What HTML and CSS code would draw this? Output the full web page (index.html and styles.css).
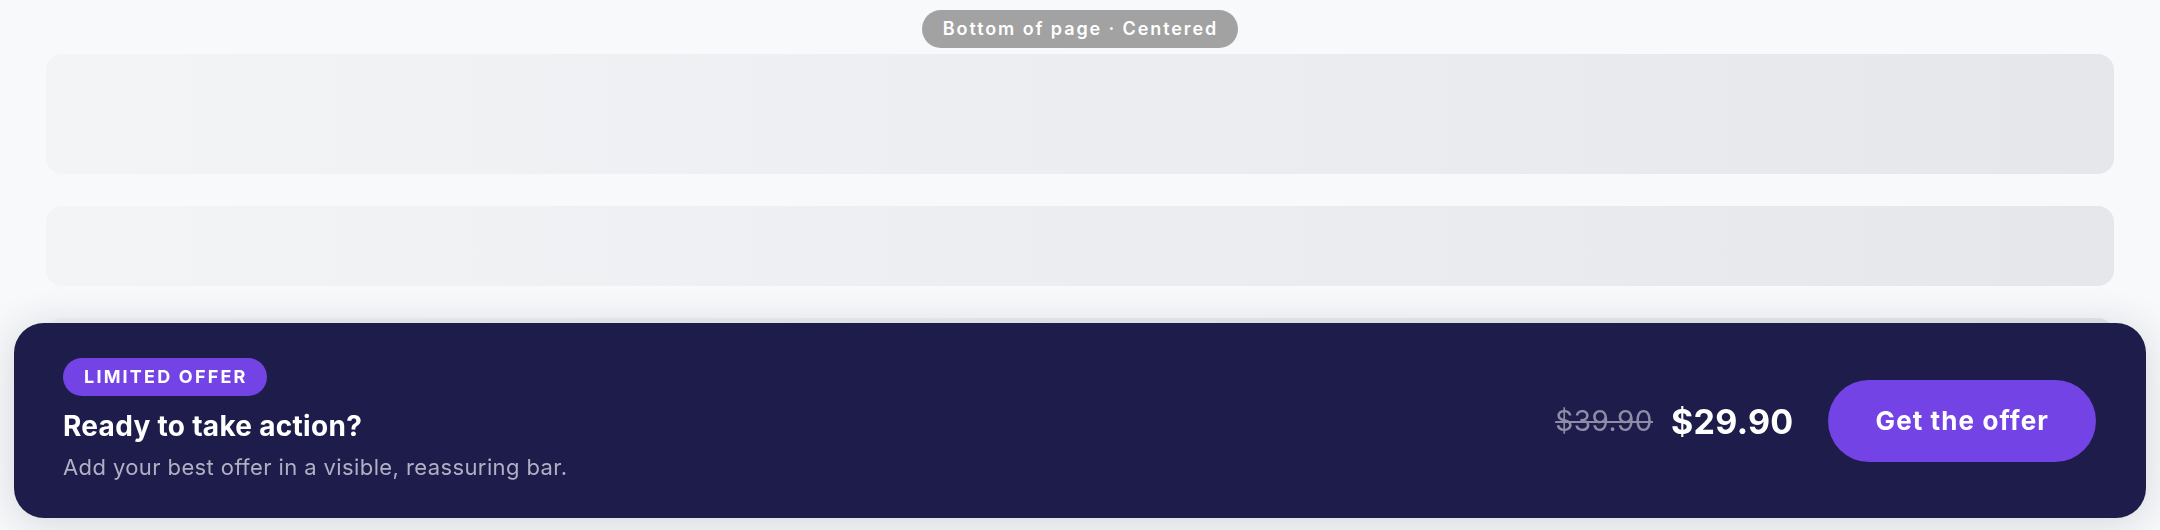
FILE: index.html
```html
<!DOCTYPE html>
<html lang="en">
<head>
<meta charset="utf-8">
<title>Sticky offer bar</title>
<link rel="stylesheet" href="styles.css">
</head>
<body>
<main class="page">
  <div class="label-row"><span class="label">Bottom of page · Centered</span></div>
  <div class="skeleton skeleton-lg"></div>
  <div class="skeleton skeleton-md"></div>
  <div class="skeleton skeleton-md"></div>
</main>
<aside class="offer-bar">
  <div class="offer-text">
    <span class="badge">LIMITED OFFER</span>
    <h2 class="offer-title">Ready to take action?</h2>
    <p class="offer-sub">Add your best offer in a visible, reassuring bar.</p>
  </div>
  <div class="offer-actions">
    <span class="price-old">$39.90</span>
    <span class="price-new">$29.90</span>
    <button class="cta" type="button">Get the offer</button>
  </div>
</aside>
</body>
</html>
```
FILE: styles.css
```css
* { box-sizing: border-box; }
html, body { margin: 0; padding: 0; }
body {
  background: #f8f9fb;
  font-family: Inter, "Noto Sans", "Liberation Sans", sans-serif;
  height: 530px;
  overflow: hidden;
}
.page {
  padding: 10px 46px 0;
  display: flex;
  flex-direction: column;
  gap: 32px;
}
.label-row {
  display: flex;
  justify-content: center;
  margin-bottom: -26px;
}
.label {
  background: #a1a2a1;
  color: #fff;
  font-size: 18px;
  font-weight: 600;
  letter-spacing: 1.9px;
  line-height: 22px;
  padding: 8px 20px 8px 21px;
  border-radius: 999px;
}
.skeleton {
  border-radius: 16px;
  background: linear-gradient(90deg, #f3f4f6, #e5e7eb);
}
.skeleton-lg { height: 120px; }
.skeleton-md { height: 80px; }

.offer-bar {
  position: fixed;
  left: 14px;
  right: 14px;
  bottom: 12px;
  background: #1e1c4b;
  border-radius: 30px;
  padding: 35px 50px 36px 49px;
  display: flex;
  align-items: center;
  justify-content: space-between;
  box-shadow: 0 4px 40px rgba(15, 23, 42, 0.16);
}
.offer-text {
  display: flex;
  flex-direction: column;
  align-items: flex-start;
}
.badge {
  background: #7443e5;
  color: #fff;
  font-size: 18px;
  font-weight: 700;
  letter-spacing: 2.2px;
  line-height: 22px;
  padding: 8px 19px 8px 21px;
  border-radius: 999px;
}
.offer-title {
  margin: 13px 0 0;
  color: #fff;
  font-size: 28px;
  font-weight: 700;
  line-height: 34px;
  letter-spacing: 0.3px;
}
.offer-sub {
  margin: 9px 0 0;
  color: #b0afc3;
  font-size: 22px;
  font-weight: 400;
  line-height: 30px;
  letter-spacing: 0.4px;
}
.offer-actions {
  display: flex;
  align-items: center;
  padding-top: 2px;
}
.price-old {
  color: #8e8ca6;
  font-size: 28px;
  letter-spacing: 0.5px;
  text-decoration: line-through;
  text-decoration-thickness: 2px;
  margin-right: 18px;
}
.price-new {
  color: #fff;
  font-size: 34px;
  font-weight: 700;
  letter-spacing: 0.3px;
  margin-right: 34px;
}
.cta {
  background: #7443e5;
  color: #fff;
  border: none;
  font-family: inherit;
  font-size: 26px;
  font-weight: 700;
  letter-spacing: 1.1px;
  line-height: 30px;
  padding: 26px 47px 26px 48px;
  border-radius: 999px;
}
```
